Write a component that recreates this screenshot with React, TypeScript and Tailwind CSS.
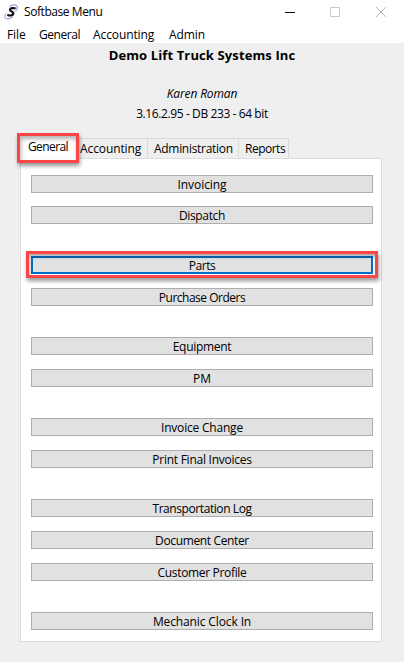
import clsx from 'clsx';

interface MenuButton {
  label: string;
  gap: string;
  tracking: string;
  active?: boolean;
}

const menus = [
  { label: 'File', style: 'w-[32px]' },
  { label: 'General', style: 'w-[54px] tracking-[-0.45px]' },
  { label: 'Accounting', style: 'w-[76px]' },
  { label: 'Admin', style: 'w-[50px]' },
];

const tabs = [
  { label: 'Accounting', style: 'w-[69px] pl-[1px]' },
  { label: 'Administration', style: 'w-[91px] pl-[6px] tracking-[-0.3px]' },
  { label: 'Reports', style: 'w-[50px] pl-[6px] tracking-[-0.5px]' },
];

const buttons: MenuButton[] = [
  { label: 'Invoicing', gap: 'mt-[16px]', tracking: 'tracking-[-0.05px]' },
  { label: 'Dispatch', gap: 'mt-[13px]', tracking: 'tracking-[-0.35px]' },
  { label: 'Parts', gap: 'mt-[32px]', tracking: 'tracking-[-0.45px]', active: true },
  { label: 'Purchase Orders', gap: 'mt-[14px]', tracking: 'tracking-[-0.5px]' },
  { label: 'Equipment', gap: 'mt-[31px]', tracking: 'tracking-[-0.3px]' },
  { label: 'PM', gap: 'mt-[14px]', tracking: 'tracking-[-0.1px]' },
  { label: 'Invoice Change', gap: 'mt-[31px]', tracking: 'tracking-[-0.2px]' },
  { label: 'Print Final Invoices', gap: 'mt-[14px]', tracking: 'tracking-[-0.25px]' },
  { label: 'Transportation Log', gap: 'mt-[31px]', tracking: 'tracking-[-0.42px]' },
  { label: 'Document Center', gap: 'mt-[14px]', tracking: 'tracking-[-0.36px]' },
  { label: 'Customer Profile', gap: 'mt-[14px]', tracking: 'tracking-[-0.33px]' },
  { label: 'Mechanic Clock In', gap: 'mt-[31px]', tracking: 'tracking-[-0.12px]' },
];

function Logo() {
  return (
    <svg width="16" height="16" viewBox="0 0 16 16" fill="none" className="shrink-0">
      <path d="M5.500 2.200C9 .3 12.800.4 13.300 2.700c.3 1.800-.8 3.500-2.300 4.800" stroke="#6676cc" />
      <path d="M2.500 9.600C.8 11.400.3 13.200 1.300 14.200c1.600 1.300 5.200.6 7.700-1.300" stroke="#8290d8" />
      <path d="M11.600 4.600C9.400 3.700 6.300 4 6 5.800c-.2 1.800 3.700 1.800 3.400 3.700-.3 2-3.400 2.500-6.100 1.500" stroke="#101018" strokeWidth="2.200" />
    </svg>
  );
}

function WindowControls() {
  return (
    <svg width="120" height="24" viewBox="0 0 120 24" fill="none" className="ml-auto shrink-0">
      <path d="M1 12.500h10" stroke="#000" />
      <path d="M46.500 7.500h9v9h-9z" stroke="#c8c8c8" />
      <path d="M92 7l10 10M102 7L92 17" stroke="#b4b4b4" />
    </svg>
  );
}

export default function App() {
  return (
    <div className="w-[404px] h-[662px] overflow-hidden bg-[#efefef] text-black text-[12px] leading-4 font-['Open_Sans','Segoe_UI',sans-serif] tracking-[-0.1px] whitespace-nowrap">
      <div className="h-[43px] bg-white">
        <div className="flex h-6 items-center pl-1">
          <Logo />
          <span className="ml-1 tracking-[-0.43px]">Softbase Menu</span>
          <WindowControls />
        </div>
        <div className="flex pl-[7px] pt-[3px]">
          {menus.map((menu) => (
            <div key={menu.label} className={menu.style}>{menu.label}</div>
          ))}
        </div>
      </div>

      <div className="text-center h-[90px] pt-[3px]">
        <h1 className="text-[13px] leading-[18px] font-bold tracking-[0.12px]">Demo Lift Truck Systems Inc</h1>
        <p className="mt-[22px] italic tracking-[-0.15px]">Karen Roman</p>
        <p className="mt-[4px] tracking-[-0.4px]">3.16.2.95 - DB 233 - 64 bit</p>
      </div>

      {/* Tab strip */}
      <div className="flex items-start h-[25px] pl-[17px]">
        <div className="relative z-10 w-[62px] h-[30px] border-[3px] border-[#f94545] bg-white pl-[8px] pt-[3px] tracking-[-0.6px] shadow-[1px_3px_4px_rgba(0,0,0,0.4),inset_1px_3px_4px_rgba(0,0,0,0.3)]">
          General
        </div>
        {tabs.map((tab) => (
          <div key={tab.label} className={clsx('mt-[5px] h-5 border-t border-r border-[#d9d9d9] pt-[2px]', tab.style)}>
            {tab.label}
          </div>
        ))}
      </div>

      <div className="ml-5 w-[362px] h-[484px] border border-[#dcdcdc] bg-white pl-[10px] flex flex-col items-start">
        {buttons.map((button) => (
          <button
            key={button.label}
            className={clsx(
              'relative w-[342px] h-[18px] shrink-0 bg-[#e1e1e1]',
              button.gap,
              button.tracking,
              button.active ? 'border-2 border-[#0070c8]' : 'border border-[#adadad]',
            )}
          >
            <span className={clsx('flex h-full items-center justify-center', !button.active && 'overflow-hidden')}>
              <span className="relative top-[1px]">{button.label}</span>
            </span>
            {button.active && (
              <span className="absolute -inset-x-[7px] -top-[7px] -bottom-[6px] border-[3px] border-[#f94545] shadow-[1px_3px_4px_rgba(0,0,0,0.4),inset_1px_3px_3px_rgba(0,0,0,0.3)]" />
            )}
          </button>
        ))}
      </div>
    </div>
  );
}
